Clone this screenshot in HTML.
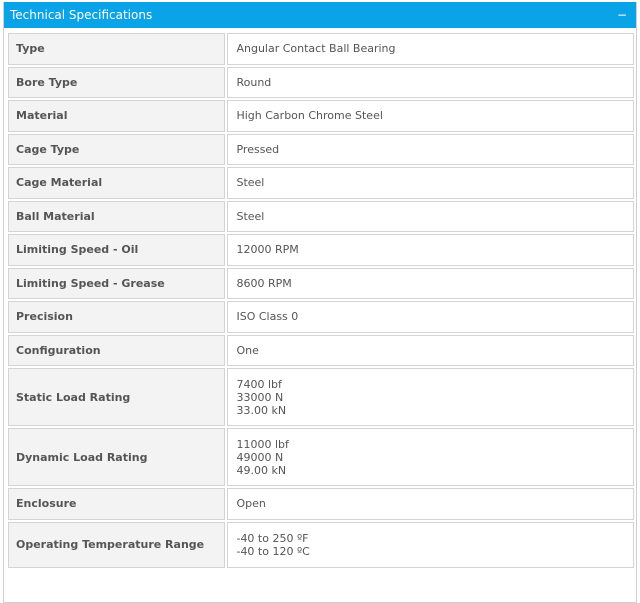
<!DOCTYPE html>
<html><head><style>
html,body{margin:0;padding:0;background:#fff;width:640px;height:552px;overflow:hidden}
.wrap{position:absolute;left:3px;top:2px;width:632px;height:600px;border:1px solid #cfcfcf;border-top:none;background:#fff}
.hd{position:absolute;left:0;top:0;width:632px;height:26px;background:#0aa3e8;color:#fff;font:12px "DejaVu Sans","Liberation Sans",sans-serif;line-height:26px;box-sizing:border-box;padding-left:6px}
.hd span{position:absolute;right:9px;top:0}
table{position:absolute;left:2px;top:29px;border-collapse:separate;border-spacing:2px;font:11px "DejaVu Sans","Liberation Sans",sans-serif;color:#555}
td{border:1px solid #d4d4d4;box-sizing:border-box;height:31.5px;vertical-align:middle;line-height:13px}
td.l{width:218px;background:#f3f3f3;font-weight:bold;padding-left:7px}
td.r{width:408px;background:#fff;padding-left:8px}
tr.t td{height:58px}
tr.b td{height:46px}
</style></head><body>
<div class="wrap">
<div class="hd">Technical Specifications<span>−</span></div>
<table>
<tr><td class="l">Type</td><td class="r">Angular Contact Ball Bearing</td></tr>
<tr><td class="l">Bore Type</td><td class="r">Round</td></tr>
<tr><td class="l">Material</td><td class="r">High Carbon Chrome Steel</td></tr>
<tr><td class="l">Cage Type</td><td class="r">Pressed</td></tr>
<tr><td class="l">Cage Material</td><td class="r">Steel</td></tr>
<tr><td class="l">Ball Material</td><td class="r">Steel</td></tr>
<tr><td class="l">Limiting Speed - Oil</td><td class="r">12000 RPM</td></tr>
<tr><td class="l">Limiting Speed - Grease</td><td class="r">8600 RPM</td></tr>
<tr><td class="l">Precision</td><td class="r">ISO Class 0</td></tr>
<tr><td class="l">Configuration</td><td class="r">One</td></tr>
<tr class="t"><td class="l">Static Load Rating</td><td class="r">7400 lbf<br>33000 N<br>33.00 kN</td></tr>
<tr class="t"><td class="l">Dynamic Load Rating</td><td class="r">11000 lbf<br>49000 N<br>49.00 kN</td></tr>
<tr><td class="l">Enclosure</td><td class="r">Open</td></tr>
<tr class="b"><td class="l">Operating Temperature Range</td><td class="r">-40 to 250 ºF<br>-40 to 120 ºC</td></tr>
</table>
</div>
</body></html>
